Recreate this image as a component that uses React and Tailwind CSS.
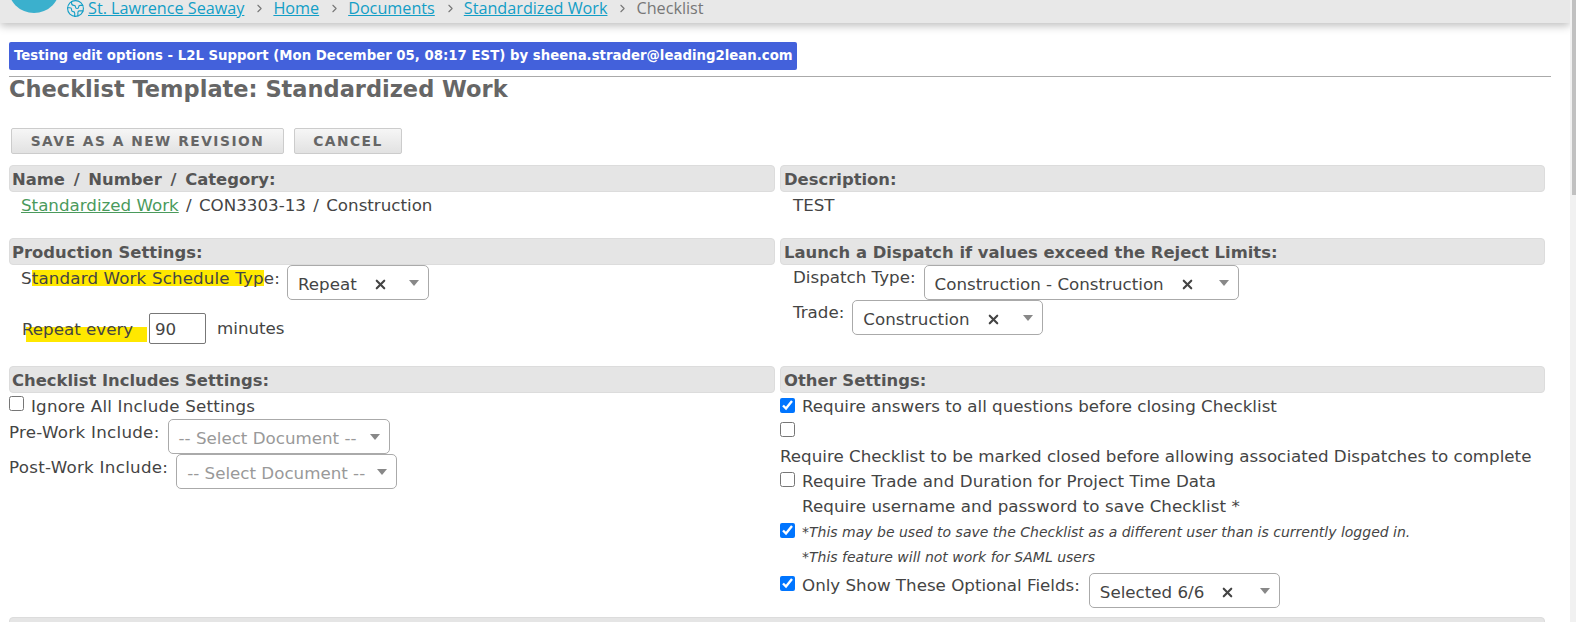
import { ChevronRight, Earth, X } from "lucide-react";

const crumbs = ["Home", "Documents", "Standardized Work"];

const SectionHead = ({ children, className = "pl-[2px]" }) => (
  <div className={`h-[27px] text-[16.4px] leading-[27px] font-bold text-[#555] bg-[#e5e5e5] border border-[#dcdcdc] rounded-[4px] ${className}`}>
    {children}
  </div>
);

// select2 style dropdown with the little clear x
const Dropdown = ({ value, width, clear = true, placeholder = false }) => (
  <div
    className={`${width} h-[35px] shrink-0 flex items-center bg-white border border-[#aaa] rounded-[5px] pl-[10px] pr-[9px] ${placeholder ? "text-[#999]" : "text-[#444]"}`}
  >
    <span className="pt-[4px] whitespace-nowrap">{value}</span>
    {clear && <X size={15} strokeWidth={3.4} className="ml-[16px] mt-[3px] text-[#444]" />}
    <span className="ml-auto w-0 h-0 border-x-[5px] border-x-transparent border-t-[6px] border-t-[#888]" />
  </div>
);

const Check = ({ checked }) => (
  <input
    type="checkbox"
    defaultChecked={checked}
    className="w-[15px] h-[15px] m-0 shrink-0 accent-[#0075ff]"
  />
);

export default function App() {
  return (
    <div className="relative h-[622px] overflow-hidden bg-white text-[16.7px] text-[#444] font-['DejaVu_Sans',Verdana,sans-serif]">
      <div className="w-[1570px]">
        {/* Top bar */}
        <div className="relative h-[23px] pl-[66px] bg-[#e8e8e8] shadow-[0_3px_8px_rgba(0,0,0,0.25)] flex items-start font-['Open_Sans',sans-serif] text-[16.2px] leading-[16px] text-[#777]">
          <div className="absolute left-[8px] -top-[39px] w-[52px] h-[52px] rounded-full bg-[#3bb0cd]" />
          <Earth size={19} strokeWidth={1.4} className="text-[#139ec6] mr-[3px] -mt-[1px]" />
          <div className="flex items-center">
            <a className="underline text-[#139ec6]">St. Lawrence Seaway</a>
            {crumbs.map((c) => (
              <span key={c} className="flex items-center">
                <ChevronRight size={13} className="ml-[9px] mr-[7px] text-[#777]" />
                <a className="underline text-[#139ec6]">{c}</a>
              </span>
            ))}
            <ChevronRight size={13} className="ml-[9px] mr-[7px] text-[#777]" />
            <span>Checklist</span>
          </div>
        </div>

        <div className="pl-[9px] pr-[19px]">
          {/* Revision banner */}
          <div className="mt-[19px] w-[788px] h-[28px] pl-[5px] leading-[27px] text-[13.3px] font-bold text-white bg-[#4361db] rounded-[2px] whitespace-nowrap">
            Testing edit options - L2L Support (Mon December 05, 08:17 EST) by sheena.strader@leading2lean.com
          </div>

          <div className="mt-[6px] border-t border-[#aaa]">
            <h1 className="text-[22.5px] leading-[25px] font-bold text-[#666]">Checklist Template: Standardized Work</h1>
          </div>

          {/* Buttons */}
          <div className="mt-[26px] ml-[2px] flex gap-[10px] text-[13.8px] font-bold text-[#666] tracking-[1.5px]">
            <button className="w-[273px] h-[26px] bg-gradient-to-b from-[#f6f6f6] to-[#e2e2e2] border border-[#ccc] rounded-[2px]">SAVE AS A NEW REVISION</button>
            <button className="w-[108px] h-[26px] bg-gradient-to-b from-[#f6f6f6] to-[#e2e2e2] border border-[#ccc] rounded-[2px]">CANCEL</button>
          </div>

          {/* Settings */}
          <div className="mt-[11px] w-[1536px] grid grid-cols-[766px_765px] gap-x-[5px] grid-rows-[73px_128px_251px]">
            <div>
              <SectionHead className="pl-[2px] [word-spacing:3px]">Name / Number / Category:</SectionHead>
              <div className="mt-[2px] pl-[12px] leading-[22px]">
                <a className="underline text-[#4a9a5c]">Standardized Work</a>
                <span className="[word-spacing:2px]"> / CON3303-13 / Construction</span>
              </div>
            </div>
            <div>
              <SectionHead className="pl-[3px]">Description:</SectionHead>
              <div className="mt-[2px] pl-[13px] leading-[22px]">TEST</div>
            </div>

            <div>
              <SectionHead>Production Settings:</SectionHead>
              <div className="pl-[12px] flex items-start">
                <span className="mt-[3px] leading-[20px] whitespace-nowrap tracking-[0.15px]">
                  S<span className="bg-[linear-gradient(to_bottom,transparent_10%,#ffe800_10%,#ffe800_88%,transparent_88%)]">tandard Work Schedule Typ</span>e:
                </span>
                <div className="ml-[7px]">
                  <Dropdown value="Repeat" width="w-[142px]" />
                </div>
              </div>
              <div className="mt-[13px] pl-[13px] flex items-center">
                <span className="relative w-[127px] leading-[20px] whitespace-nowrap">
                  <span className="absolute left-[4px] top-[8px] w-[121px] h-[15px] bg-[#ffe800]" />
                  <span className="relative">Repeat every</span>
                </span>
                <input defaultValue="90" className="w-[57px] h-[31px] pl-[5px] border border-[#777] rounded-[2px] text-[#444]" />
                <span className="ml-[11px]">minutes</span>
              </div>
            </div>
            <div>
              <SectionHead className="pl-[3px]">Launch a Dispatch if values exceed the Reject Limits:</SectionHead>
              <div className="pl-[13px] flex items-start">
                <span className="mt-[2px] leading-[20px]">Dispatch Type:</span>
                <div className="ml-[8px]"><Dropdown value="Construction - Construction" width="w-[315px]" /></div>
              </div>
              <div className="pl-[13px] flex items-start">
                <span className="mt-[2px] leading-[20px]">Trade:</span>
                <div className="ml-[8px]"><Dropdown value="Construction" width="w-[191px]" /></div>
              </div>
            </div>

            <div>
              <SectionHead>Checklist Includes Settings:</SectionHead>
              <div className="mt-[3px] flex items-start h-[23px]">
                <Check />
                <span className="ml-[7px] leading-[21px] whitespace-nowrap tracking-[0.2px]">Ignore All Include Settings</span>
              </div>
              <div className="flex items-start">
                <span className="mt-[3px] leading-[20px] tracking-[0.28px]">Pre-Work Include:</span>
                <div className="ml-[8px]"><Dropdown value="-- Select Document --" width="w-[222px]" clear={false} placeholder /></div>
              </div>
              <div className="flex items-start">
                <span className="mt-[3px] leading-[20px] tracking-[0.28px]">Post-Work Include:</span>
                <div className="ml-[8px]"><Dropdown value="-- Select Document --" width="w-[221px]" clear={false} placeholder /></div>
              </div>
            </div>
            <div>
              <SectionHead className="pl-[3px]">Other Settings:</SectionHead>
              <div className="mt-[5px] flex items-start h-[24px]">
                <Check checked />
                <span className="ml-[7px] leading-[17px] whitespace-nowrap">Require answers to all questions before closing Checklist</span>
              </div>
              <div className="h-[25px] flex items-start"><Check /></div>
              <div className="leading-[19px] h-[25px] whitespace-nowrap">Require Checklist to be marked closed before allowing associated Dispatches to complete</div>
              <div className="flex items-start h-[25px]">
                <Check />
                <span className="ml-[7px] leading-[18px] whitespace-nowrap tracking-[0.06px]">Require Trade and Duration for Project Time Data</span>
              </div>
              <div className="pl-[22px] leading-[19px] h-[25px] whitespace-nowrap tracking-[0.06px]">Require username and password to save Checklist *</div>
              <div className="flex items-start h-[24px] mt-[1px]">
                <Check checked />
                <span className="ml-[7px] italic text-[14px] leading-[18px] whitespace-nowrap">*This may be used to save the Checklist as a different user than is currently logged in.</span>
              </div>
              <div className="pl-[22px] italic text-[14px] leading-[20px] h-[25px] whitespace-nowrap">*This feature will not work for SAML users</div>
              <div className="flex items-start mt-[4px]">
                <Check checked />
                <span className="ml-[7px] leading-[18px] whitespace-nowrap">Only Show These Optional Fields:</span>
                <div className="ml-[9px] -mt-[3px]"><Dropdown value="Selected 6/6" width="w-[191px]" /></div>
              </div>
            </div>
          </div>

          <div className="w-[1536px] h-[27px] bg-[#e5e5e5] border border-[#dcdcdc] rounded-[4px]" />
        </div>
      </div>

      {/* Page scrollbar */}
      <div className="absolute top-0 right-0 w-[6px] h-full pl-[2px] bg-[#f1f1f1]">
        <div className="h-[195px] bg-[#c1c1c1]" />
      </div>
    </div>
  );
}
